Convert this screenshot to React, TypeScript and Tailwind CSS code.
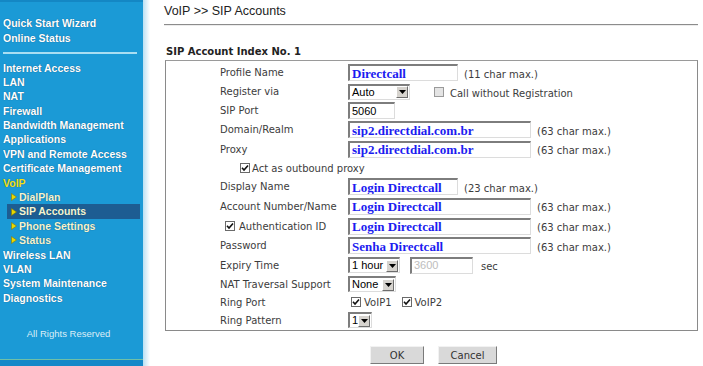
import React from "react";

const sans = { fontFamily: '"DejaVu Sans", Verdana, sans-serif' };
const arial = { fontFamily: '"Liberation Sans", Arial, sans-serif' };
const serif = { fontFamily: '"Liberation Serif", "Times New Roman", serif' };

type NavItem = { label: string; sub?: boolean; active?: boolean; voip?: boolean };

const topItems = ["Quick Start Wizard", "Online Status"];

const navItems: NavItem[] = [
  { label: "Internet Access" },
  { label: "LAN" },
  { label: "NAT" },
  { label: "Firewall" },
  { label: "Bandwidth Management" },
  { label: "Applications" },
  { label: "VPN and Remote Access" },
  { label: "Certificate Management" },
  { label: "VoIP", voip: true },
  { label: "DialPlan", sub: true },
  { label: "SIP Accounts", sub: true, active: true },
  { label: "Phone Settings", sub: true },
  { label: "Status", sub: true },
  { label: "Wireless LAN" },
  { label: "VLAN" },
  { label: "System Maintenance" },
  { label: "Diagnostics" },
];

function Arrow() {
  return (
    <svg width="6" height="8" viewBox="0 0 6 8" className="shrink-0">
      <polygon points="0.5,0.5 5.5,4 0.5,7.5" fill="#e9d800" stroke="#8a7a00" strokeWidth="0.6" />
    </svg>
  );
}

function Sidebar() {
  return (
    <div
      className="w-[143px] h-full bg-[#1b9ad6] flex flex-col text-white font-bold text-[10.5px] border-t-[2px] border-[#1487c4]"
      style={arial}
    >
      <div className="pt-[14px] pl-[3px]">
        {topItems.map((t) => (
          <div key={t} className="h-[14.5px] leading-[14.5px] [text-shadow:0_0_1px_#0b4f7a]">
            {t}
          </div>
        ))}
      </div>
      <div className="mt-[6.5px] ml-[3px] w-[134px] h-[2px] bg-[#a9def2]" />
      <div className="mt-[7px]">
        {navItems.map((n) =>
          n.sub ? (
            <div
              key={n.label}
              className={
                "h-[14.4px] flex items-center gap-[2px] " +
                (n.active ? "ml-[7px] w-[133px] pl-[4px] bg-[#1d5d92]" : "pl-[11px]")
              }
            >
              <Arrow />
              <span className="leading-[14.4px] text-[#f6f4cf] [text-shadow:0_0_1px_#0b4f7a]">{n.label}</span>
            </div>
          ) : (
            <div
              key={n.label}
              className={
                "h-[14.4px] leading-[14.4px] pl-[3px] [text-shadow:0_0_1px_#0b4f7a] " +
                (n.voip ? "text-[#f2e21a]" : "")
              }
            >
              {n.label}
            </div>
          )
        )}
      </div>
      <div className="mt-auto pb-[18px] text-center pr-[6px] text-[9.5px] font-normal text-[#dbeef7]" style={arial}>
        All Rights Reserved
      </div>
      <div className="h-px bg-[#6fc0a8]" />
      <div className="h-[6px] bg-[#1588c8]" />
    </div>
  );
}

function Check() {
  return (
    <span className="inline-flex w-[10px] h-[10px] border border-[#6a6a6a] bg-white items-center justify-center shrink-0">
      <svg width="8" height="8" viewBox="0 0 8 8">
        <path d="M1 3.8 L3 6 L7 1.5" fill="none" stroke="#111" strokeWidth="1.6" />
      </svg>
    </span>
  );
}

function TextBox({ w, value, blue, disabled }: { w: string; value?: string; blue?: boolean; disabled?: boolean }) {
  return (
    <div
      className={
        w +
        " h-[17px] border-t-2 border-l-2 border-[#7d7d7d] border-b border-r border-b-[#dcdcdc] border-r-[#dcdcdc] bg-white flex items-center pl-[2px] overflow-hidden whitespace-nowrap"
      }
    >
      {blue ? (
        <span className="text-[13px] font-bold text-[#1c1cf0] leading-none" style={serif}>
          {value}
        </span>
      ) : (
        <span className={"text-[11px] leading-none " + (disabled ? "text-[#bdbdbd]" : "text-black")} style={arial}>
          {value}
        </span>
      )}
    </div>
  );
}

function Select({ w, value }: { w: string; value: string }) {
  return (
    <div
      className={
        w +
        " h-[16px] border-t-2 border-l-2 border-[#7d7d7d] border-b border-r border-b-[#dcdcdc] border-r-[#dcdcdc] bg-white flex items-center"
      }
    >
      <span className="flex-1 pl-[2px] text-[11px] leading-none text-black" style={arial}>
        {value}
      </span>
      <span className="w-[12px] h-[12px] mr-px bg-[#d6d3ce] border-r border-b border-[#6d6d6d] border-t border-l border-t-white border-l-white flex items-center justify-center">
        <svg width="7" height="4" viewBox="0 0 7 4">
          <polygon points="0,0 7,0 3.5,4" fill="#000" />
        </svg>
      </span>
    </div>
  );
}

function Note({ children }: { children: React.ReactNode }) {
  return <span className="text-[10px] text-[#3c3c3c] whitespace-nowrap">{children}</span>;
}

function Row({
  label,
  children,
  labelClass = "",
  h = "h-[19px]",
}: {
  label: React.ReactNode;
  children?: React.ReactNode;
  labelClass?: string;
  h?: string;
}) {
  return (
    <div className={h + " flex items-center"}>
      <div className={"w-[182px] shrink-0 pl-[54px] text-[10px] text-[#3c3c3c] whitespace-nowrap " + labelClass}>{label}</div>
      <div className="flex items-center">{children}</div>
    </div>
  );
}

export default function App() {
  return (
    <div className="w-[703px] h-[366px] flex bg-white overflow-hidden" style={sans}>
      <Sidebar />
      <div className="w-[7px] h-full bg-gradient-to-r from-[#b9e0f3] to-white" />
      <div className="flex-1 flex flex-col">
        <div className="pt-[3px] pl-[14px] h-[19px] text-[12.5px] leading-[16px] text-[#222]" style={arial}>
          VoIP &gt;&gt; SIP Accounts
        </div>
        <div className="mt-[5px] ml-[14px] mr-[5px] h-px bg-[#8c8c8c]" />
        <div className="ml-[14px] mr-[5px] h-px bg-[#ececec]" />
        <div className="mt-[20px] pl-[16px] h-[12px] leading-[12px] text-[10px] font-bold text-[#222]">
          SIP Account Index No. 1
        </div>
        <div className="mt-[2px] ml-[15px] mr-[5px] h-[271px] border border-[#8a8a8a] border-t-[#9a9a9a] pt-[2px]">
          <Row label="Profile Name">
            <TextBox w="w-[110px]" value="Directcall" blue />
            <span className="ml-[6px]">
              <Note>(11 char max.)</Note>
            </span>
          </Row>
          <Row label="Register via">
            <Select w="w-[62px]" value="Auto" />
            <span className="ml-[24px] w-[10px] h-[10px] border border-[#9a9a9a] bg-[#e4e4e4]" />
            <span className="ml-[6px]">
              <Note>Call without Registration</Note>
            </span>
          </Row>
          <Row label="SIP Port">
            <TextBox w="w-[47px]" value="5060" />
          </Row>
          <Row label="Domain/Realm">
            <TextBox w="w-[183px]" value="sip2.directdial.com.br" blue />
            <span className="ml-[6px]">
              <Note>(63 char max.)</Note>
            </span>
          </Row>
          <Row label="Proxy" h="h-[20px]">
            <TextBox w="w-[183px]" value="sip2.directdial.com.br" blue />
            <span className="ml-[6px]">
              <Note>(63 char max.)</Note>
            </span>
          </Row>
          <div className="h-[18px] flex items-center pl-[74px] gap-[2px]">
            <Check />
            <Note>Act as outbound proxy</Note>
          </div>
          <Row label="Display Name">
            <TextBox w="w-[110px]" value="Login Directcall" blue />
            <span className="ml-[6px]">
              <Note>(23 char max.)</Note>
            </span>
          </Row>
          <Row label="Account Number/Name" h="h-[20px]">
            <TextBox w="w-[183px]" value="Login Directcall" blue />
            <span className="ml-[6px]">
              <Note>(63 char max.)</Note>
            </span>
          </Row>
          <Row
            h="h-[20px]"
            labelClass="!pl-[59px]"
            label={
              <span className="flex items-center gap-[4px]">
                <Check />
                Authentication ID
              </span>
            }
          >
            <TextBox w="w-[183px]" value="Login Directcall" blue />
            <span className="ml-[6px]">
              <Note>(63 char max.)</Note>
            </span>
          </Row>
          <Row label="Password">
            <TextBox w="w-[183px]" value="Senha Directcall" blue />
            <span className="ml-[6px]">
              <Note>(63 char max.)</Note>
            </span>
          </Row>
          <Row label="Expiry Time" h="h-[20px]">
            <Select w="w-[52px]" value="1 hour" />
            <span className="ml-[10px]">
              <TextBox w="w-[63px]" value="3600" disabled />
            </span>
            <span className="ml-[8px]">
              <Note>sec</Note>
            </span>
          </Row>
          <Row label="NAT Traversal Support" h="h-[18px]">
            <Select w="w-[48px]" value="None" />
          </Row>
          <Row label="Ring Port" h="h-[18px]">
            <span className="ml-[3px] flex items-center gap-[3px]">
              <Check />
              <Note>VoIP1</Note>
            </span>
            <span className="ml-[10px] flex items-center gap-[3px]">
              <Check />
              <Note>VoIP2</Note>
            </span>
          </Row>
          <Row label="Ring Pattern" h="h-[18px]">
            <Select w="w-[24px]" value="1" />
          </Row>
        </div>
        <div className="mt-[15px] ml-[220px] flex gap-[14px]">
          <button className="w-[54px] h-[18px] bg-[#d9d9d9] border border-[#f2f2f2] border-r-[#7a7a7a] border-b-[#7a7a7a] text-[10px] text-[#333]">
            OK
          </button>
          <button className="w-[59px] h-[18px] bg-[#d9d9d9] border border-[#f2f2f2] border-r-[#7a7a7a] border-b-[#7a7a7a] text-[10px] text-[#333]">
            Cancel
          </button>
        </div>
      </div>
    </div>
  );
}
